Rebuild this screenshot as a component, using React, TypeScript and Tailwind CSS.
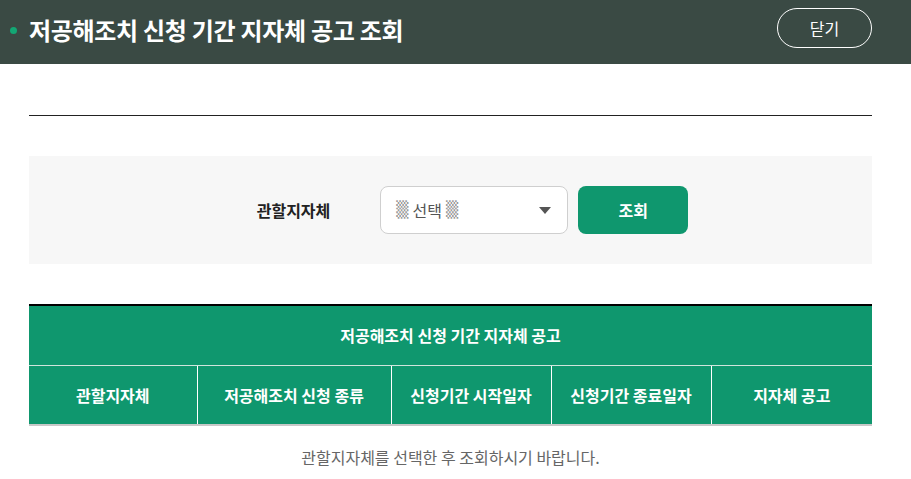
const columns = [
  { name: '관할지자체', width: 'w-[168px]' },
  { name: '저공해조치 신청 종류', width: 'w-[194px]' },
  { name: '신청기간 시작일자', width: 'w-[160px]' },
  { name: '신청기간 종료일자', width: 'w-[160px]' },
  { name: '지자체 공고', width: 'w-[161px]' },
];

export default function App() {
  return (
    <div className="min-h-[479px] w-full bg-white font-['Noto_Sans_CJK_KR','Noto_Sans',sans-serif] text-[#222]">
      {/* Header */}
      <header className="flex h-[64px] items-center justify-between bg-[#3a4a44] pl-[10px] pr-[39px]">
        <div className="flex items-center gap-[12px]">
          <span className="mb-[4px] h-[7px] w-[7px] rounded-full bg-[#13a774]" />
          <h1 className="pb-[4px] text-[24px] font-bold tracking-[-0.3px] text-white">
            저공해조치 신청 기간 지자체 공고 조회
          </h1>
        </div>
        <button className="mb-[8px] flex h-[40px] w-[95px] items-center justify-center rounded-full border border-white text-[16px] text-white">
          닫기
        </button>
      </header>

      <div className="pl-[29px] pr-[39px] pt-[51px]">
        <div className="h-px bg-[#222]" />

        {/* Search */}
        <div className="mt-[40px] flex h-[108px] items-center justify-center bg-[#f7f7f7] pl-[44px]">
          <span className="mr-[50px] text-[16px] font-bold text-[#222]">관할지자체</span>
          <div className="flex h-[48px] w-[188px] items-center justify-between rounded-[8px] border border-[#cfcfcf] bg-white pl-[15px] pr-[16px] text-[16px] text-[#555]">
            <span className="flex items-center gap-[4px]">
              <span className="font-['DejaVu_Sans',sans-serif] text-[16px] leading-none text-[#999]">▒</span>
              선택
              <span className="font-['DejaVu_Sans',sans-serif] text-[16px] leading-none text-[#999]">▒</span>
            </span>
            <svg width="12" height="7" viewBox="0 0 12 7">
              <path d="M0 0h12L6 7z" fill="#555" />
            </svg>
          </div>
          <button className="ml-[10px] h-[48px] w-[110px] rounded-[8px] bg-[#0f976e] text-[16px] font-bold text-white">
            조회
          </button>
        </div>

        {/* Table */}
        <table className="mt-[40px] w-full border-collapse border-t-2 border-t-black text-[16px] font-bold text-white">
          <thead>
            <tr className="h-[60px] bg-[#0f976e]">
              <th colSpan={5} className="border-b border-b-[#cfe5dc] font-bold">
                저공해조치 신청 기간 지자체 공고
              </th>
            </tr>
            <tr className="h-[60px] border-b-2 border-b-[#c8c8c8] bg-[#0f976e]">
              {columns.map((col, i) => (
                <th
                  key={col.name}
                  className={`${col.width} font-bold ${i > 0 ? 'border-l border-l-white' : ''}`}
                >
                  {col.name}
                </th>
              ))}
            </tr>
          </thead>
          <tbody>
            <tr>
              <td colSpan={5} className="h-[62px] text-center text-[16px] font-normal text-[#666]">
                관할지자체를 선택한 후 조회하시기 바랍니다.
              </td>
            </tr>
          </tbody>
        </table>
      </div>
    </div>
  );
}
